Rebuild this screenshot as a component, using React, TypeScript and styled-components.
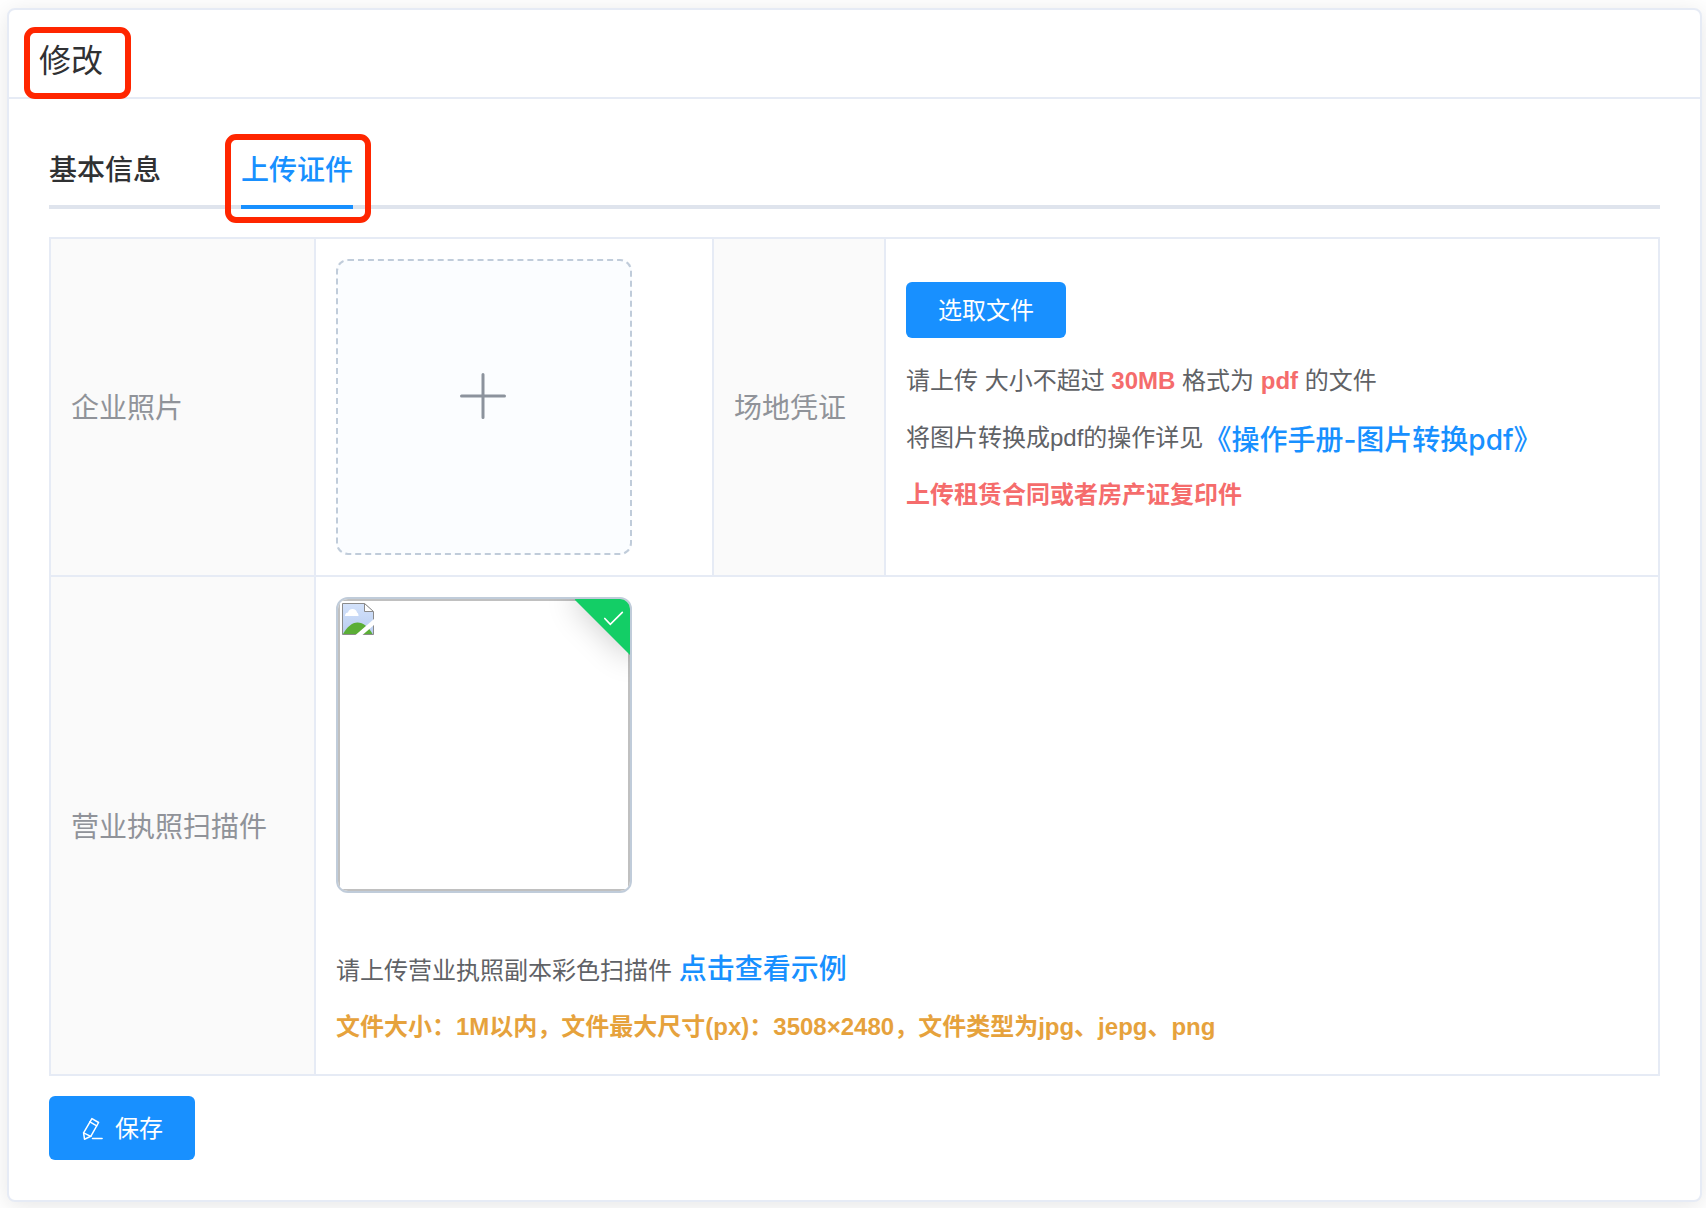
import React, { useState } from "react";
import styled, { createGlobalStyle, css } from "styled-components";

const color = {
  primary: "#1890ff",
  danger: "#f56c6c",
  warning: "#e6a23c",
  success: "#13ce66",
  title: "#303133",
  text: "#606266",
  label: "#909399",
  line: "#e6ebf5",
  frame: "#c0ccda",
  mark: "#ff2600",
};

const GlobalStyle = createGlobalStyle`
  *, *::before, *::after { box-sizing: border-box; }
  body {
    margin: 0;
    background: #fff;
    color: ${color.text};
    font-family: "Liberation Sans", "Noto Sans CJK SC", sans-serif;
    font-size: 24px;
  }
  button { font-family: inherit; }
`;

const Page = styled.main`
  padding: 8px 4px 6px 7px;
`;

const Card = styled.section`
  border: 2px solid ${color.line};
  border-radius: 8px;
  background: #fff;
  box-shadow: 0 4px 24px rgba(0, 0, 0, 0.1);
`;

const CardHeader = styled.header`
  display: flex;
  align-items: center;
  height: 89px;
  padding: 0 30px;
  border-bottom: 2px solid ${color.line};
`;

const Title = styled.h1`
  position: relative;
  margin: 0;
  padding-top: 14px;
  color: ${color.title};
  font-size: 32px;
  line-height: 40px;
  font-weight: 400;
`;

const CardBody = styled.div`
  padding: 40px;
`;

const Highlight = styled.span<{ $inset: string }>`
  position: absolute;
  inset: ${(p) => p.$inset};
  border: 6px solid ${color.mark};
  border-radius: 11px;
  pointer-events: none;
`;

const TabList = styled.div`
  display: flex;
  gap: 80px;
  margin-bottom: 28px;
  box-shadow: inset 0 -4px #dfe4ed;
`;

const Tab = styled.button<{ $active: boolean }>`
  position: relative;
  height: 70px;
  padding: 0 0 2px;
  border: 0;
  border-bottom: 4px solid ${(p) => (p.$active ? color.primary : "transparent")};
  background: none;
  color: ${(p) => (p.$active ? color.primary : color.title)};
  font-size: 28px;
  line-height: 40px;
  font-weight: 500;
  cursor: pointer;
`;

const Table = styled.table`
  width: 100%;
  table-layout: fixed;
  border-collapse: collapse;
`;

const Col = styled.col<{ $width?: number }>`
  width: ${(p) => (p.$width ? `${p.$width}px` : "auto")};
`;

const LabelCell = styled.th`
  padding: 24px 20px 20px;
  border: 2px solid ${color.line};
  background: #fafafa;
  color: ${color.label};
  font-size: 28px;
  line-height: 40px;
  font-weight: 400;
  text-align: left;
`;

const Cell = styled.td`
  padding: 20px;
  border: 2px solid ${color.line};
`;

const tile = css`
  display: flex;
  width: 296px;
  height: 296px;
  border-radius: 12px;
`;

const UploadTile = styled.button`
  ${tile}
  align-items: center;
  justify-content: center;
  padding: 0 2px 22px 0;
  border: 2px dashed ${color.frame};
  background: #fbfdff;
  cursor: pointer;
`;

const PreviewTile = styled.div`
  ${tile}
  position: relative;
  overflow: hidden;
  border: 2px solid ${color.frame};
`;

const Preview = styled.div`
  flex: 1;
  padding: 2px;
  border: 2px solid #c0c0c0;
`;

const Ribbon = styled.span`
  position: absolute;
  top: -12px;
  right: -30px;
  width: 80px;
  height: 48px;
  background: ${color.success};
  box-shadow: 0 0 32px 2px rgba(0, 0, 0, 0.2);
  transform: rotate(45deg);
`;

const RibbonIcon = styled.svg`
  position: absolute;
  top: 8px;
  right: 4px;
`;

const Notes = styled.div<{ $top: number; $gap: number }>`
  display: flex;
  flex-direction: column;
  gap: ${(p) => p.$gap}px;
  margin-top: ${(p) => p.$top}px;
`;

const Note = styled.p<{ $tone?: string }>`
  margin: 0;
  color: ${(p) => p.$tone ?? "inherit"};
  font-weight: ${(p) => (p.$tone ? 700 : 400)};
  font-size: 24px;
  line-height: 54px;
`;

const Strong = styled.strong`
  color: ${color.danger};
`;

const Link = styled.a<{ $middle?: boolean }>`
  display: inline-block;
  vertical-align: ${(p) => (p.$middle ? "middle" : "baseline")};
  color: ${color.primary};
  font-family: Inter, "Noto Sans CJK SC", sans-serif;
  font-size: 28px;
  line-height: 40px;
  font-weight: 500;
  text-decoration: none;
`;

const Button = styled.button<{ $large?: boolean }>`
  display: inline-flex;
  align-items: center;
  gap: 10px;
  height: ${(p) => (p.$large ? 64 : 56)}px;
  padding: 2px 32px 0;
  border: 0;
  border-radius: 6px;
  background: ${color.primary};
  color: #fff;
  font-size: 24px;
  line-height: 24px;
  cursor: pointer;
`;

const VoucherBody = styled.div`
  padding-bottom: 10px;
`;

const Actions = styled.div`
  display: flex;
  margin-top: 20px;
`;

const PlusIcon = () => (
  <svg width="48" height="48" viewBox="0 0 48 48" fill="none" stroke="#8c939d" strokeWidth="3" strokeLinecap="round" aria-hidden="true">
    <path d="M24 2.500v43M2.500 24h43" />
  </svg>
);

const PenIcon = () => (
  <svg width="24" height="24" viewBox="0 0 24 24" fill="none" stroke="currentColor" strokeWidth="1.5" strokeLinejoin="round" strokeLinecap="round" aria-hidden="true">
    <path d="M10.9 1.6 17.6 5.5 9.8 19.3 3.5 22.2 2.6 15.8Z" />
    <path d="M8.9 4.9 15.7 8.8M2.6 15.8 9.8 19.3M11.5 21.6h9.6" />
  </svg>
);

const BrokenImageIcon = () => (
  <svg width="32" height="32" viewBox="0 0 32 32" role="img" aria-label="营业执照扫描件">
    <defs>
      <linearGradient id="sky" x1="0" y1="0" x2="0" y2="1">
        <stop offset="0" stopColor="#d3e2fb" />
        <stop offset="1" stopColor="#b9cdf0" />
      </linearGradient>
    </defs>
    <path d="M.5.5h22l9 8.5v22.500H.5z" fill="url(#sky)" />
    <path d="M3 13c0-2.500 1.500-3.500 3-3.500C6.500 7.500 8 6 10.500 6s4 1.500 4.500 3.500c1 .5 1.500 1.500 1.500 3.500z" fill="#fff" />
    <path d="M1 31c4-7 9-11.500 14.500-11.500S27 24 30.500 31z" fill="#5bae36" />
    <path d="M.5 31.500V.5h22l9 8.500v22.500z" fill="none" stroke="#8b8b8b" />
    <path d="M22.500.5v8h9z" fill="#fff" stroke="#8b8b8b" />
    <path d="M13.500 32 32 16v6L20.500 32z" fill="#fff" />
  </svg>
);

const tabs = ["基本信息", "上传证件"];

export default function App() {
  const [active, setActive] = useState(1);

  return (
    <Page lang="zh-CN">
      <GlobalStyle />
      <Card>
        <CardHeader>
          <Title>
            修改
            <Highlight $inset="0 -28px -18px -15px" />
          </Title>
        </CardHeader>
        <CardBody>
          <TabList role="tablist">
            {tabs.map((name, i) => (
              <Tab key={name} type="button" role="tab" aria-selected={i === active} $active={i === active} onClick={() => setActive(i)}>
                {name}
                {i === 1 && <Highlight $inset="-5px -18px -18px -16px" />}
              </Tab>
            ))}
          </TabList>

          <Table>
            <colgroup>
              <Col $width={265} />
              <Col $width={398} />
              <Col $width={172} />
              <Col />
            </colgroup>
            <tbody>
              <tr>
                <LabelCell scope="row">企业照片</LabelCell>
                <Cell>
                  <UploadTile type="button" aria-label="企业照片">
                    <PlusIcon />
                  </UploadTile>
                </Cell>
                <LabelCell scope="row">场地凭证</LabelCell>
                <Cell>
                  <VoucherBody>
                    <Button type="button">选取文件</Button>
                    <Notes $top={16} $gap={3}>
                      <Note>
                        请上传 大小不超过 <Strong>30MB</Strong> 格式为 <Strong>pdf</Strong> 的文件
                      </Note>
                      <Note>
                        将图片转换成pdf的操作详见
                        <Link href="#manual" $middle>《操作手册-图片转换pdf》</Link>
                      </Note>
                      <Note $tone={color.danger}>上传租赁合同或者房产证复印件</Note>
                    </Notes>
                  </VoucherBody>
                </Cell>
              </tr>
              <tr>
                <LabelCell scope="row">营业执照扫描件</LabelCell>
                <Cell colSpan={3}>
                  <PreviewTile>
                    <Preview>
                      <BrokenImageIcon />
                    </Preview>
                    <Ribbon />
                    <RibbonIcon width="24" height="24" viewBox="0 0 24 24" fill="none" stroke="#fff" strokeWidth="1.7" strokeLinecap="round" aria-hidden="true">
                      <path d="M2.800 11.500 8.300 17.300 20.300 5.300" />
                    </RibbonIcon>
                  </PreviewTile>
                  <Notes $top={51} $gap={2}>
                    <Note>
                      请上传营业执照副本彩色扫描件 <Link href="#example">点击查看示例</Link>
                    </Note>
                    <Note $tone={color.warning}>文件大小：1M以内，文件最大尺寸(px)：3508×2480，文件类型为jpg、jepg、png</Note>
                  </Notes>
                </Cell>
              </tr>
            </tbody>
          </Table>

          <Actions>
            <Button type="button" $large>
              <PenIcon />
              保存
            </Button>
          </Actions>
        </CardBody>
      </Card>
    </Page>
  );
}
